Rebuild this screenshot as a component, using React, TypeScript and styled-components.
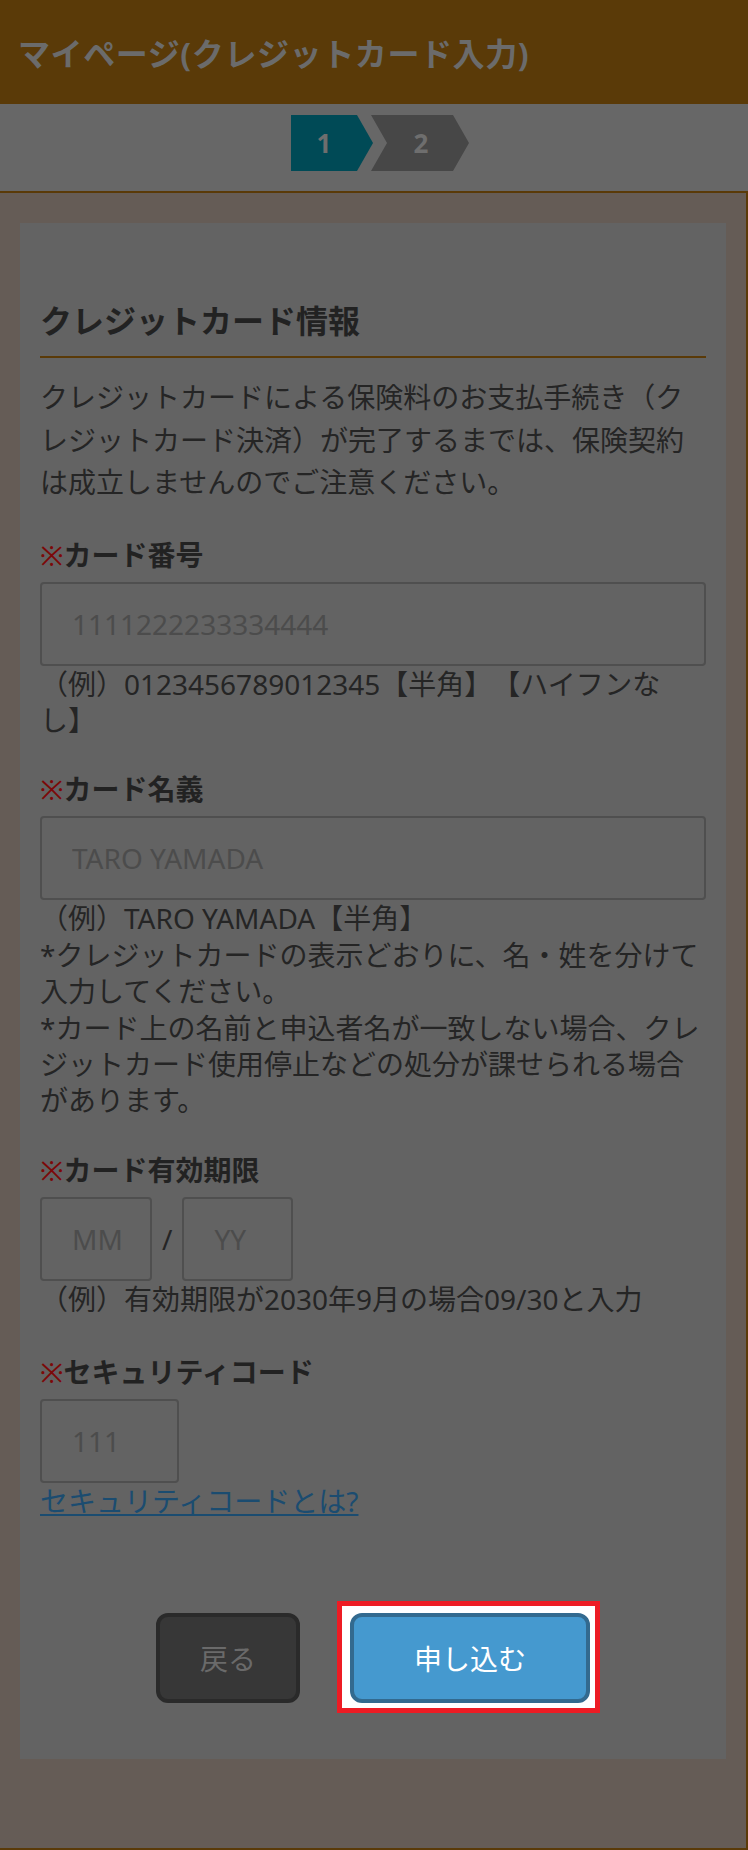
import React from 'react';
import styled, { createGlobalStyle } from 'styled-components';

const GlobalStyle = createGlobalStyle`
  html, body {
    margin: 0;
    padding: 0;
    background: #655c56;
  }
  * {
    box-sizing: border-box;
  }
  body {
    font-family: 'Noto Sans', 'Noto Sans CJK JP', sans-serif;
    color: #252525;
    text-spacing-trim: space-all;
  }
`;

const Page = styled.div`
  display: flex;
  flex-direction: column;
  min-height: 1850px;
  width: 748px;
`;

const Header = styled.header`
  height: 104px;
  background: #5a3a08;
  display: flex;
  align-items: center;
  padding-left: 18px;
`;

const Title = styled.h1`
  margin: 0;
  font-size: 32px;
  font-weight: 700;
  color: #6b6b6b;
  letter-spacing: 0.6px;
`;

const StepBar = styled.div`
  background: #676767;
  border-bottom: 2px solid #5a3a08;
  display: flex;
  justify-content: center;
  padding: 11px 0 20px 12px;
`;

const Step = styled.div<{ $active?: boolean; $first?: boolean }>`
  height: 56px;
  width: ${(p) => (p.$first ? '82px' : '98px')};
  margin-left: ${(p) => (p.$first ? '0' : '-2px')};
  padding: ${(p) => (p.$first ? '0 16px 0 0' : '0 14px 0 16px')};
  background: ${(p) => (p.$active ? '#004a56' : '#474747')};
  clip-path: ${(p) =>
    p.$first
      ? 'polygon(0 0, 66px 0, 82px 28px, 66px 56px, 0 56px)'
      : 'polygon(0 0, 82px 0, 98px 28px, 82px 56px, 0 56px, 16px 28px)'};
  display: flex;
  align-items: center;
  justify-content: center;
  font-size: 26px;
  font-weight: 700;
  color: #6e6e6e;
`;

const Content = styled.main`
  flex: 1;
  background: #655c56;
  border-right: 2px solid #5a3a08;
  border-bottom: 2px solid #5a3a08;
  padding: 30px 20px 89px 20px;
`;

const Card = styled.section`
  background: #636363;
  padding: 77px 20px 56px;
`;

const Heading = styled.h2`
  margin: 0;
  font-size: 32px;
  font-weight: 700;
  line-height: 42px;
  padding-bottom: 14px;
  border-bottom: 2px solid #5a3a08;
  color: #222;
`;

const Lead = styled.p`
  margin: 18px 0 0;
  font-size: 28px;
  line-height: 42.5px;
`;

const Field = styled.div<{ $space?: number }>`
  margin-top: ${(p) => p.$space ?? 30}px;
`;

const Label = styled.div`
  font-size: 28px;
  font-weight: 700;
  line-height: 42px;
  margin-bottom: 6px;
  color: #222;
`;

const Required = styled.span`
  color: #7c0808;
  font-weight: 400;
`;

const Input = styled.input<{ $width?: string }>`
  display: block;
  width: ${(p) => p.$width || '100%'};
  height: 84px;
  border: 2px solid #4f4f4f;
  border-radius: 4px;
  background: #636363;
  padding: 0 0 0 30px;
  font-family: inherit;
  font-size: 28px;
  color: #252525;
  outline: none;

  &::placeholder {
    color: #4c4c4c;
    opacity: 1;
  }
`;

const DateRow = styled.div`
  display: flex;
  align-items: center;
  gap: 10px;
`;

const Slash = styled.span`
  font-size: 28px;
  color: #252525;
`;

const Hint = styled.div`
  font-size: 28px;
  line-height: 36.4px;
`;

const HelpLink = styled.a`
  display: inline-block;
  font-size: 28px;
  line-height: 36px;
  color: #1b4c70;
  text-decoration: underline;
`;

const Actions = styled.div`
  display: flex;
  justify-content: center;
  gap: 50px;
  margin-top: 94px;
`;

const Button = styled.button`
  height: 90px;
  border-radius: 12px;
  border: 4px solid #2a2a2a;
  background: #373737;
  color: #6a6a6a;
  font-family: inherit;
  font-size: 28px;
  cursor: pointer;
  position: relative;
  z-index: 1;
`;

const BackButton = styled(Button)`
  width: 144px;
`;

const SubmitButton = styled(Button)`
  width: 240px;
  background: #4599cf;
  border-color: #336a8f;
  color: #ffffff;
`;

const Highlight = styled.span`
  position: relative;
  display: inline-flex;

  &::before {
    content: '';
    position: absolute;
    top: -12px;
    right: -10px;
    bottom: -10px;
    left: -13px;
    background: #ffffff;
    border: 5px solid #ed1c24;
    z-index: 0;
  }
`;

const App: React.FC = () => {
  return (
    <>
      <GlobalStyle />
      <Page>
        <Header>
          <Title>マイページ(クレジットカード入力)</Title>
        </Header>
        <StepBar>
          <Step $first $active>1</Step>
          <Step>2</Step>
        </StepBar>
        <Content>
          <Card>
            <Heading>クレジットカード情報</Heading>
            <Lead>
              クレジットカードによる保険料のお支払手続き（クレジットカード決済）が完了するまでは、保険契約は成立しませんのでご注意ください。
            </Lead>

            <Field>
              <Label>
                <Required>※</Required>カード番号
              </Label>
              <Input placeholder="1111222233334444" />
              <Hint>（例）0123456789012345【半角】【ハイフンなし】</Hint>
            </Field>

            <Field>
              <Label>
                <Required>※</Required>カード名義
              </Label>
              <Input placeholder="TARO YAMADA" />
              <Hint>
                （例）TARO YAMADA【半角】
                <br />
                *クレジットカードの表示どおりに、名・姓を分けて入力してください。
                <br />
                *カード上の名前と申込者名が一致しない場合、クレジットカード使用停止などの処分が課せられる場合があります。
              </Hint>
            </Field>

            <Field>
              <Label>
                <Required>※</Required>カード有効期限
              </Label>
              <DateRow>
                <Input $width="112px" placeholder="MM" />
                <Slash>/</Slash>
                <Input $width="111px" placeholder="YY" />
              </DateRow>
              <Hint>（例）有効期限が2030年9月の場合09/30と入力</Hint>
            </Field>

            <Field $space={34}>
              <Label>
                <Required>※</Required>セキュリティコード
              </Label>
              <Input $width="139px" placeholder="111" />
              <HelpLink href="#">セキュリティコードとは?</HelpLink>
            </Field>

            <Actions>
              <BackButton>戻る</BackButton>
              <Highlight>
                <SubmitButton>申し込む</SubmitButton>
              </Highlight>
            </Actions>
          </Card>
        </Content>
      </Page>
    </>
  );
};

export default App;
